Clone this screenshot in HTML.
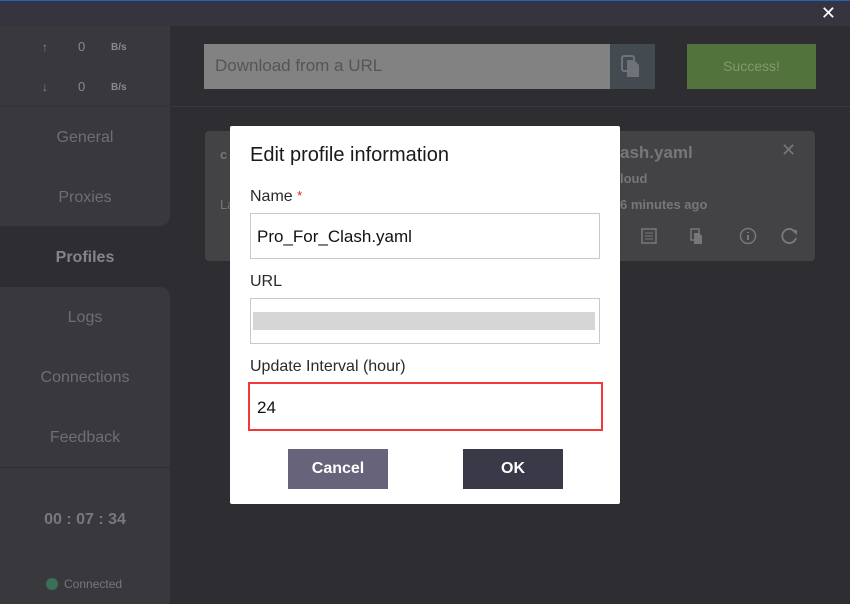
<!DOCTYPE html>
<html><head><meta charset="utf-8"><style>
*{box-sizing:border-box;margin:0;padding:0}
body{width:850px;height:604px;overflow:hidden;background:#2e2d32;font-family:"Liberation Sans",sans-serif;position:relative}
.abs{position:absolute}
.top{left:0;top:0;width:850px;height:26px;background:#35343f;border-top:1px solid #1769c0}
.sb{color:#6f6e72;font-size:16px;text-align:center;width:170px;left:0}
.grp{background:#39383d;left:0;width:170px}
.t{color:#2a2a2a}
</style></head><body>
<div class="abs top"></div>
<div class="abs" style="right:14px;top:3px;color:#fff;font-size:18px">✕</div>
<!-- sidebar -->
<div class="abs grp" style="top:26px;height:200px;border-bottom-right-radius:10px"></div>
<div class="abs" style="left:0;top:106px;width:170px;height:1px;background:#333237"></div>
<div class="abs" style="left:0;top:227px;width:170px;height:60px;background:#2e2d32"></div>
<div class="abs grp" style="top:287px;height:180px;border-top-right-radius:10px"></div>
<div class="abs grp" style="top:468px;height:136px"></div>
<div class="abs" style="left:42px;top:40px;color:#8a898c;font-size:12px">↑</div>
<div class="abs" style="left:78px;top:39px;color:#8a898c;font-size:13px">0</div>
<div class="abs" style="left:111px;top:42px;color:#8a898c;font-size:10px;font-weight:bold">B/s</div>
<div class="abs" style="left:42px;top:80px;color:#8a898c;font-size:12px">↓</div>
<div class="abs" style="left:78px;top:79px;color:#8a898c;font-size:13px">0</div>
<div class="abs" style="left:111px;top:82px;color:#8a898c;font-size:10px;font-weight:bold">B/s</div>
<div class="abs sb" style="top:129px">General</div>
<div class="abs sb" style="top:189px">Proxies</div>
<div class="abs sb" style="top:249px;color:#858488;font-weight:bold">Profiles</div>
<div class="abs sb" style="top:309px">Logs</div>
<div class="abs sb" style="top:369px">Connections</div>
<div class="abs sb" style="top:429px">Feedback</div>
<div class="abs sb" style="top:511px;font-weight:bold;color:#79787c">00 : 07 : 34</div>
<div class="abs" style="left:46px;top:578px;width:12px;height:12px;border-radius:50%;background:#3c7056"></div>
<div class="abs" style="left:64px;top:577px;color:#78777b;font-size:12px">Connected</div>
<!-- top main -->
<div class="abs" style="left:204px;top:44px;width:407px;height:45px;background:#828282;color:#555;font-size:17px;padding:12px 11px">Download from a URL</div>
<div class="abs" style="left:610px;top:44px;width:45px;height:45px;background:#434a50"></div>
<svg class="abs" style="left:621px;top:55px" width="22" height="24" viewBox="0 0 22 24"><rect x="1" y="1" width="12" height="15" rx="2" fill="none" stroke="#6f7378" stroke-width="2"/><path d="M6 5h7l5 5v12H6z" fill="#6f7378"/></svg>
<div class="abs" style="left:687px;top:44px;width:129px;height:45px;background:#53733c;color:#7f9b6c;font-size:14px;text-align:center;line-height:45px">Success!</div>
<div class="abs" style="left:170px;top:106px;width:680px;height:1px;background:#3a393e"></div>
<!-- card -->
<div class="abs" style="left:205px;top:131px;width:610px;height:130px;background:#434245;border-radius:4px"></div>
<div class="abs" style="left:620px;top:143px;color:#77767a;font-size:17px;font-weight:bold">ash.yaml</div>
<div class="abs" style="left:781px;top:140px;color:#77767a;font-size:18px">✕</div>
<div class="abs" style="left:620px;top:171px;color:#77767a;font-size:13px;font-weight:bold">loud</div>
<div class="abs" style="left:620px;top:197px;color:#77767a;font-size:13px;font-weight:bold">6 minutes ago</div>
<div class="abs" style="left:220px;top:147px;color:#77767a;font-size:13px;font-weight:bold">c</div>
<div class="abs" style="left:220px;top:197px;color:#77767a;font-size:13px">La</div>
<svg class="abs" style="left:640px;top:227px" width="160" height="20"><rect x="2" y="2" width="14" height="14" fill="none" stroke="#77767a" stroke-width="1.5"/><path d="M5 6h8M5 9h8M5 12h8" stroke="#77767a"/><rect x="51" y="2" width="8" height="11" fill="none" stroke="#77767a" stroke-width="1.5"/><path d="M54 6h5l3 3v8h-8z" fill="#77767a"/><circle cx="108" cy="9" r="7.5" fill="none" stroke="#77767a" stroke-width="1.5"/><path d="M108 8v5M108 5v1" stroke="#77767a" stroke-width="2"/><path d="M155 5a7 7 0 1 0 1 6" fill="none" stroke="#77767a" stroke-width="2"/><path d="M151 3h6v5z" fill="#77767a"/></svg>
<!-- dialog -->
<div class="abs" style="left:230px;top:126px;width:390px;height:378px;background:#fff;border-radius:2px"></div>
<div class="abs t" style="left:250px;top:144px;font-size:20px;color:#1a1a1a">Edit profile information</div>
<div class="abs t" style="left:250px;top:188px;font-size:16px">Name <span style="color:#e02020;font-size:13px;vertical-align:top">*</span></div>
<div class="abs" style="left:250px;top:213px;width:350px;height:46px;border:1px solid #c8c8d0;padding:13px 6px;font-size:17px;color:#111">Pro_For_Clash.yaml</div>
<div class="abs t" style="left:250px;top:273px;font-size:16px">URL</div>
<div class="abs" style="left:250px;top:298px;width:350px;height:46px;border:1px solid #c8c8d0"></div>
<div class="abs" style="left:253px;top:312px;width:342px;height:18px;background:#d6d6d6"></div>
<div class="abs t" style="left:250px;top:358px;font-size:16px">Update Interval (hour)</div>
<div class="abs" style="left:248px;top:382px;width:355px;height:49px;border:2px solid #f03a3a;padding:14px 7px;font-size:17px;color:#111">24</div>
<div class="abs" style="left:288px;top:449px;width:100px;height:40px;background:#66637a;color:#fff;font-size:16px;font-weight:bold;text-align:center;line-height:40px">Cancel</div>
<div class="abs" style="left:463px;top:449px;width:100px;height:40px;background:#3a3948;color:#fff;font-size:16px;font-weight:bold;text-align:center;line-height:40px">OK</div>
</body></html>
